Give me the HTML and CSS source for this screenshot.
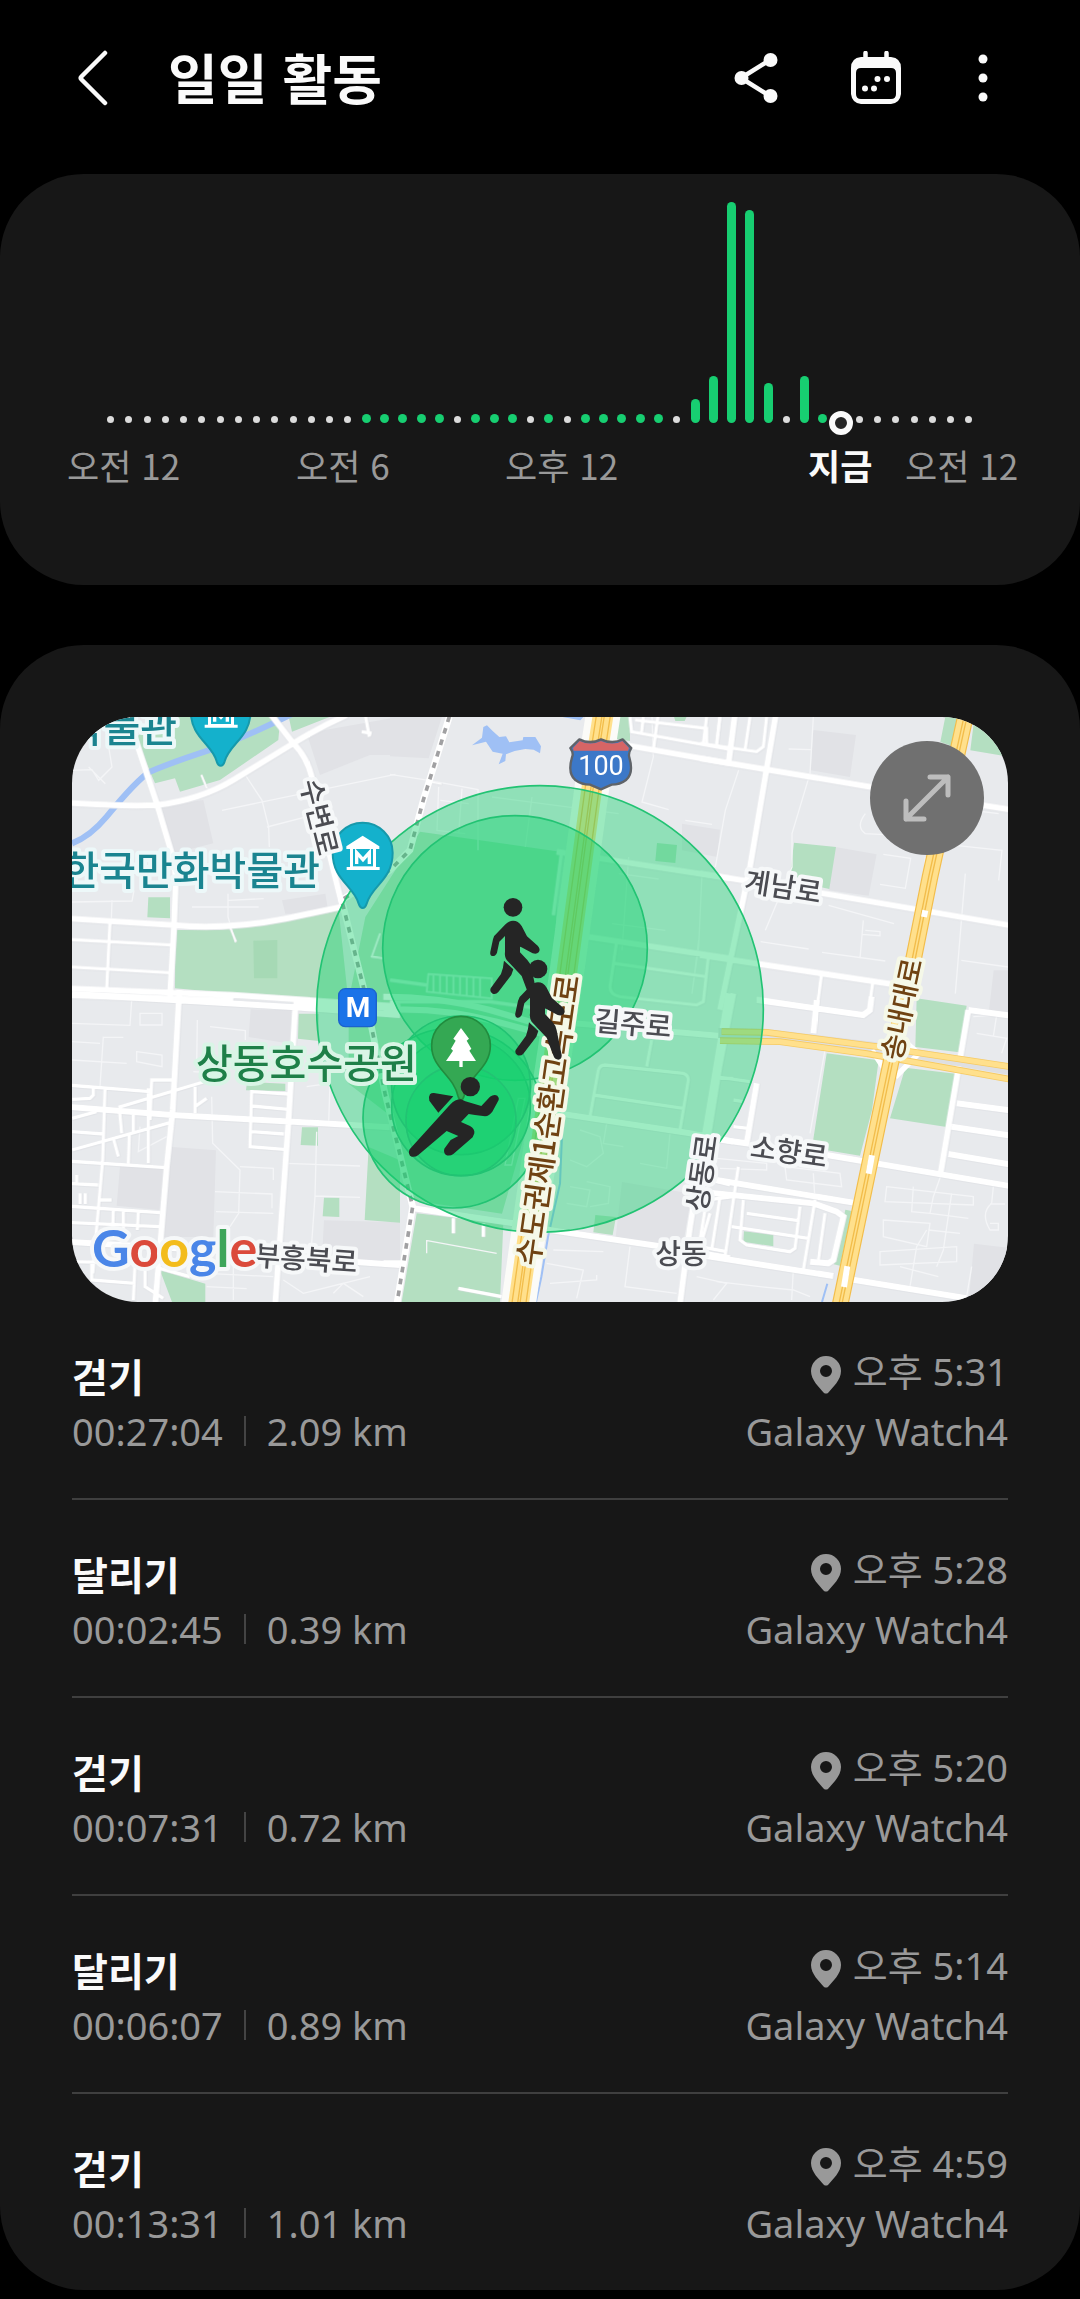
FILE: index.html
```html
<!DOCTYPE html>
<html lang="ko">
<head>
<meta charset="utf-8">
<meta name="viewport" content="width=device-width, initial-scale=1">
<title>일일 활동</title>
<link rel="stylesheet" href="styles.css">
</head>
<body>
<header class="topbar">
  <button class="icon-btn" aria-label="뒤로">
    <svg width="32" height="58" viewBox="0 0 32 58"><path d="M28 4 4.500 27.500Q3 29 4.500 30.500L28 54" fill="none" stroke="currentColor" stroke-width="4.500" stroke-linecap="round"/></svg>
  </button>
  <h1 class="title">일일 활동</h1>
  <div class="actions">
    <button class="icon-btn" aria-label="공유">
      <svg width="44" height="52" viewBox="0 0 44 52" fill="currentColor"><path d="M7 26 36 8M7 26 36 44" stroke="currentColor" stroke-width="4.500"/><circle cx="7.500" cy="26" r="7"/><circle cx="36.500" cy="8" r="7"/><circle cx="36.500" cy="44" r="7"/></svg>
    </button>
    <button class="icon-btn" aria-label="달력">
      <svg width="50" height="54" viewBox="0 0 50 54" fill="currentColor"><path fill-rule="evenodd" d="M10 6H40Q50 7 50 17V43Q49 52 40 53H10Q1 52 0 43V17Q0 7 10 6ZM10 17Q5 17 5 22V43Q5 48 10 48H40Q45 48 45 43V22Q45 17 40 17Z"/><path d="M14.500 2V8M35.500 2V8" stroke="currentColor" stroke-width="4.500" stroke-linecap="round"/><circle cx="26.500" cy="28" r="3"/><circle cx="36" cy="28" r="3"/><circle cx="14" cy="37.500" r="3"/><circle cx="23" cy="37.500" r="3"/></svg>
    </button>
    <button class="icon-btn narrow" aria-label="더보기">
      <svg width="10" height="48" viewBox="0 0 10 48" fill="currentColor"><circle cx="5" cy="5" r="4.500"/><circle cx="5" cy="24" r="4.500"/><circle cx="5" cy="43" r="4.500"/></svg>
    </button>
  </div>
</header>

<main>
<section class="card chart" aria-label="시간대별 활동">
  <div class="bars">
    <i></i><i></i><i></i><i></i><i></i><i></i><i></i><i></i><i></i><i></i><i></i><i></i><i></i><i></i>
    <b></b><b></b><b></b><b></b><b></b><i></i><b></b><b></b><b></b><i></i><b></b><i></i>
    <b></b><b></b><b></b><b></b><b></b><i></i>
    <b style="height:24px"></b><b style="height:47px"></b><b style="height:221px"></b><b style="height:213px"></b><b style="height:40px"></b><i></i><b style="height:47px"></b><b></b><i class="now"></i>
    <i></i><i></i><i></i><i></i><i></i><i></i><i></i>
  </div>
  <div class="axis"><span>오전 12</span><span>오전 6</span><span>오후 12</span><strong>지금</strong><span>오전 12</span></div>
</section>

<section class="card log">
  <div class="map">
    <svg class="map-art" viewBox="0 0 936 585" role="img" aria-label="활동 지도">
      <rect width="936" height="585" fill="#e8eaed"/>
      <g transform="scale(.33333)">
        <!-- districts -->
        <g fill="#e1e2e6">
          <path d="M269 269 394 249 424 379 304 409ZM704 49 984-1V114H894L744 174ZM630 550 760 530 770 590 640 590Z"/>
          <path d="M954-1H1110L1070 124 954 118ZM1830 320 1944 338 1936 420 1830 400ZM2224 39 2352 54 2334 180 2216 160ZM2290 390 2414 412 2390 536 2270 520Z"/>
          <path d="M536 877 660 880 654 980 530 960ZM300 1290 432 1300 424 1560 266 1560ZM144 1348 276 1352 268 1480 134 1466ZM756 1510 984 1516V1640L750 1620Z"/>
          <path d="M2706 1580 2808 1592V1755H2690ZM1650 1395 1860 1430 1830 1600 1630 1570ZM2765 760H2808V890H2750Z"/>
        </g>
        <!-- parks -->
        <g fill="#b4dfc1">
          <path d="M190 60 300-1H625L619 69 444 189 324 224 309 184 249 199ZM650-1H775L660 44ZM229 541H294V604L226 601ZM309 639H444L644 609 800 580 830 860 309 814Z"/>
          <path d="M1638-1H1674V72L1630 66ZM1806-1H1844L1838 12H1810ZM1755 378 1815 384 1810 438 1750 432ZM2166 377 2292 390 2272 516 2152 490ZM2620-1H2665L2650 90 2605 75ZM2705 20 2808 60V119L2695 100Z"/>
          <path d="M1044 344 1464 404 1430 1000 1290 1490 1020 1450 960 1200 830 1100 830 850 880 600ZM680 890H740V972L678 965ZM525 1095 640 1100V1122L522 1120ZM690 1231H738V1286L686 1284ZM756 1442H802V1500L752 1498ZM890 1290 984 1330V1517L878 1509ZM264 1660 400 1700V1755H300Z"/>
          <path d="M1034 1489 1294 1519 1284 1755H989ZM1570 1494 1632 1500 1622 1554 1564 1546ZM2264 1009 2420 1030 2400 1180 2364 1316 2220 1292ZM2534 844 2684 866 2662 1006 2530 990ZM2500 1052 2650 1070 2624 1230 2454 1204ZM2016 1543 2104 1554V1588L2014 1574ZM2320 1478 2340 1482 2304 1646 2286 1642Z"/>
        </g>
        <path d="M544 671 616 669V784H546Z" fill="#a6d9b5"/>
        <!-- water -->
        <path d="M0 379Q54 359 104 299 194 189 234 164 304 134 444 89 564 39 664-11" fill="none" stroke="#9fc0f5" stroke-width="18"/>
        <path d="M1200 85 1230 62 1234 30 1245 25 1262 42 1282 60 1302 58 1312 76 1352 70 1354 60 1390 60 1407 88 1404 109 1385 98 1360 96 1328 102 1302 112 1300 132 1280 142 1292 110 1262 104 1242 74ZM1466-1H1535L1525 10Z" fill="#9fc0f5"/>
        <path d="M1472 1210 1464 1400 1428 1560 1408 1680 1392 1755M2266 1700 2250 1755" fill="none" stroke="#9fc0f5" stroke-width="6"/>
        <!-- minor streets -->
        <g class="lanes">
          <path d="M0 160 60 158 80 190 120 150 110 90M50 150 100 200M388 174 410 220M520 174 570 250 590 330 592 390M450 280 970 172M585 330 740 290M360 570H560M468 530V600L490 676M470 550 575 545M120 550 118 610M0 555 180 552 186 520"/>
          <path d="M954 172 1070 190 1218 218V400M1100 210 1095 340 1180 350M1170 215 1160 350M1105 250 1190 260M1260 240 1640 290M1380 240 1360 390M1740-1 1744 120 1710 255 1790 278M1840 310 1920 322M2000 160 1960 280 1930 450M1640 470 1760 486M1620 620 1780 640M1670 420 1650 700M1890 470 1880 690 1860 830 1880 670"/>
          <path d="M2224 0 2214 170 2160 350V450L2080 640M2150 96 2216 98M2380 290Q2350 330 2380 350L2480 355M2434 412 2516 424 2500 514 2424 502M2560 420 2544 620M2620 270 2780 290M2600 380 2790 400 2780 490M2680 470 2650 830M2066 674 2210 696M2250 706 2440 732M2374 610 2364 724M2270 565 2466 620M2380 640 2424 644V656L2370 652M2668 730 2808 750"/>
        </g>
        <g class="lanes" transform="translate(-36 849)">
          <path d="M36 70 210 76 215 0M36 125 120 130M36 180 200 190M130 110 120 260M190 112 128 112M230 155 306 165V200L230 185ZM240 40H306V75H240ZM412 60 410 200M450 80 556 92V120M455 290 458 430 540 510 536 640 510 680M400 215 500 222M465 575 636 582V625M468 635 640 640M540 500 640 505V540M740 260 810 250 806 370M680 490 900 498M770 395 765 590 750 800M765 588 900 592M670 840 730 880 850 850 910 890M820 880 850 850 930 830M440 860 560 866M520 800V900M240 380 235 455 320 410M440 820 640 830"/>
        </g>
        <g class="lanes" transform="translate(954 849)">
          <path d="M385 295H405L365 495H345ZM570 390 630 410 640 460 590 500 540 480M650 370 640 430 700 440M750 490 830 505 840 400M540 560 600 570 590 620 530 610M590 545 660 560 655 610 600 620M490 750 640 755M470 790 580 810 560 895M480 850 620 840V825M720 740 705 860 860 880M920 830 1010 850 970 900M110 720V760M112 722 320 760"/>
        </g>
        <g class="lanes" transform="translate(1884 849)">
          <path d="M375 150 330 400M255 500 420 520 425 560 260 540ZM340 520 345 600M560 560 820 590V615L555 605ZM640 560 635 635 690 640 700 590 725 520M550 660 690 670 680 740 550 710ZM540 755 770 740V785L540 795ZM690 640 805 655M685 690 780 700M680 690 650 740 630 860M755 580 730 750 710 800M600 800 715 830M880 560 875 610Q840 640 870 690H895V670H870M870 612H915M820 50 890 45 880 110M830 100 920 115 905 160M50 845 180 860 280 870 330 890M280 810 275 900M815 800 800 890M0 470 200 490V510L60 505"/>
        </g>
        <!-- streets -->
        <g class="streets">
          <g transform="translate(-36 -51)">
            <path d="M220 100 290 310 338 470Q350 520 345 600L342 680 330 890M20 308Q200 320 290 315 420 300 520 240L700 130Q780 80 860 45M630 40 700 130Q740 170 755 230L800 430 845 610M20 655 340 675Q500 690 680 655L845 620M20 865 520 885 1020 920M20 885 520 903"/>
            <path class="mid" d="M20 718 335 735M20 800 330 818M150 665 140 870M915 40 928 110M905 95 935 100"/>
            <path class="thin" d="M424 225 440 265M505 670 528 725M960 700 935 770 970 775"/>
          </g>
          <g transform="translate(954 -51)">
            <path d="M620 120 1020 190M500 455 1020 535M590 710 1020 775"/>
            <path class="mid" d="M805 40 790 150M720 50 725 95 1020 148M735 60 950 85V135M990 45 980 135M760 50 755 95M680 725 660 860Q660 885 690 890L920 915 940 905 955 770M672 790 950 830M515 455 490 645M0 840 110 855M0 905 300 905 480 930"/>
            <path class="thin" d="M115 822 305 835V895L110 875ZM130 825V875M150 825V880M170 825V882M190 830V885M210 830V885M230 830V890M250 830V890M270 835V892M120 245 155 252"/>
          </g>
          <g transform="translate(1884 -51)">
            <path d="M0 175 520 262M850 316 940 330M228 40 150 500 60 930M0 520 400 585 940 678M0 765 640 862M105 40 85 195"/>
            <path class="mid" d="M0 130 170 155 190 140 200 50M60 50 50 130M20 50 10 130M150 50 135 150M365 820 350 930M518 850 505 940M170 895 460 942"/>
          </g>
          <g transform="translate(-36 849)">
            <path d="M358-30 338 330 320 500 285 920M706 20 685 370 645 920M20 320 335 345 700 365 990 382M36-18 706 22 1020 45M700 10 1020 25M20 725 600 760M800 780 1020 795"/>
            <path class="mid" d="M20 255 270 275M36 298 90 295 100 285V258M135 265 128 480 98 820M270 360 275 240H340M178 325 185 400M175 322 450 240M36 355 110 335M36 395 130 402M36 450 330 368M160 415 175 470M220 345V395M208 400 205 490M20 483 318 503M20 550 115 555M20 618 300 638M20 667 300 680M20 785 300 790M95 785V840L225 850M225 790 220 900M235 635 232 690M160 625 158 690M190 630V690M405 340V260M405 320 440 295M575 270 570 440 672 448M575 275 685 282M575 318 685 328M575 395 672 402M50 525V550M60 580V612M76 580V612M115 600H155M255 810V860L310 895M265 265V490M300 805 390 830"/>
          </g>
          <g transform="translate(954 849)">
            <path d="M-20 -10 Q150 -10 300 30L470 80M-20 30Q150 20 320 65L470 105M440 60 1020 110M70 625 370 670 480 690 830 742 1020 775M440 330 900 400 1030 425M1015 -20 945 400 900 680 870 910M-20 790H40"/>
            <path class="mid" d="M625 210Q630 195 645 195L880 220Q895 225 895 240L870 390M625 210 600 350M610 285 880 325M785 120 770 200M990 235H1030M190 655V700M280 670V710M205 865 335 890M960 540 1020 555M960 640 930 740 1010 755M950 600 1030 590"/>
          </g>
          <g transform="translate(1884 849)">
            <path d="M380 465 940 560M170 250 140 430 0 410M350 0 340 100M170 0 490 45 510 30 515 -10M90 0 10 500M100 -20 20 400M50 540 460 608M0 765 400 828M450 838 800 895M805 30 720 530M805 30 940 48M770 310 940 332M755 380 940 408M745 462 940 495M0 575 340 610 410 635 430 650 400 780 385 790 330 785"/>
            <path class="mid" d="M115 500 75 770M60 590 35 750M130 600 120 720 140 735 270 755 285 745 300 620M140 640 295 662M95 680 325 715M345 600 310 810M375 640 355 780M20 600 0 720M60 232 150 245M100 380 145 385M130 305 100 300"/>
          </g>
        </g>
        <!-- highways -->
        <g fill="none">
          <path d="M1594-10 1560 210 1484 769 1419 1200 1339 1765" stroke="#fbfbf8" stroke-width="104"/>
          <path d="M1594-10 1560 210 1484 769 1419 1200 1339 1765" stroke="#ffe08c" stroke-width="62"/>
          <path d="M1574-10 1540 210 1464 769 1399 1200 1319 1765M1591-10 1557 210 1481 769 1416 1200 1336 1765M1598-10 1564 210 1488 769 1423 1200 1343 1765M1616-10 1582 210 1506 769 1441 1200 1361 1765" stroke="#f2bd4b" stroke-width="4"/>
          <path d="M1939 948 2080 950 2424 992 2820 1060" stroke="#dedfe2" stroke-width="30"/>
          <path d="M2400 1000 2446 1070M2484 960 2540 1010 2470 1080M2470 930 2440 1010" stroke="#fff" stroke-width="16"/>
          <path d="M1949 944 2084 946 2424 990 2820 1050M1944 971 2124 974 2384 1010 2820 1088" stroke="#f6ca63" stroke-width="20"/>
          <path d="M1949 944 2084 946 2424 990 2820 1050M1944 971 2124 974 2384 1010 2820 1088" stroke="#ffe08c" stroke-width="15"/>
          <path d="M2682-10 2574 480 2524 729 2454 1049 2304 1765" stroke="#f2bd4b" stroke-width="50"/>
          <path d="M2682-10 2574 480 2524 729 2454 1049 2304 1765" stroke="#ffe08c" stroke-width="43"/>
          <path d="M2678-10 2570 480 2520 729 2450 1049 2300 1765M2687-10 2579 480 2529 729 2459 1049 2309 1765" stroke="#f2bd4b" stroke-width="4"/>
          <path d="M2400 1315 2390 1370M2326 1648 2316 1710M2560 580 2556 600" stroke="#fff" stroke-width="18"/>
        </g>
        <!-- railway -->
        <g fill="none">
          <path d="M1132-1 1054 249 1014 399 954 459 809 549 874 809 939 1129 1022 1469 974 1765" stroke="#fff" stroke-width="20"/>
          <path d="M1132-1 1054 249 1014 399 954 459 809 549 874 809 939 1129 1022 1469 974 1765" stroke="#a0a0a2" stroke-width="11" stroke-dasharray="17 19"/>
        </g>
        <!-- activity areas -->
        <g class="areas">
          <circle cx="1404" cy="876" r="670"/>
          <circle cx="1329" cy="693" r="397"/>
          <circle cx="1143" cy="1203" r="270"/>
          <circle cx="1167" cy="1168" r="208"/>
          <circle cx="1167" cy="1105" r="208"/>
          <circle cx="1167" cy="1211" r="165"/>
        </g>
        <!-- museum pins -->
        <g id="museum">
          <path d="M872 573Q864 573 860 560C845 505 782 490 782 407A90 90 0 0 1 962 407C962 490 899 505 884 560Q880 573 872 573Z" fill="#14b1cc" stroke="#1699ab" stroke-width="6"/>
          <path d="M823 388 872 356 922 388V396H912V450H923V459H824V450H834V396H823Z" fill="#fff"/>
          <path d="M843 396H903V448H843Z" fill="#14b1cc"/>
          <path d="M854 441V407L873 428 892 407V441" fill="none" stroke="#fff" stroke-width="10"/>
        </g>
        <use href="#museum" x="-426" y="-427"/>
        <rect x="800" y="815" width="113" height="114" rx="20" fill="#1a73e8" stroke="#1b62cc" stroke-width="4"/>
        <!-- route shield -->
        <g transform="translate(954 -51)">
          <path d="M568 118Q600 134 633 118 668 134 698 118L724 144Q714 160 718 172 732 220 708 240 690 254 665 254L633 268 600 254Q575 254 556 240 532 220 546 172 552 160 541 144Z" fill="#3c78c8" stroke="#5f6368" stroke-width="7" stroke-linejoin="round"/>
          <path d="M569 123Q600 138 633 123 668 138 697 123L717 144 714 152H551L549 144Z" fill="#d66565"/>
        </g>
        <!-- park pin -->
        <g transform="translate(954 849)">
          <path d="M213 300Q207 300 204 288C190 225 125 205 125 137A88 88 0 0 1 301 137C301 205 236 225 222 288Q219 300 213 300Z" fill="#34a853" stroke="#218c3e" stroke-width="5"/>
          <path d="M213 84 237 116 230 122 244 146 238 152 258 183H218V201H208V183H168L189 152 183 146 197 122 190 116Z" fill="#fff"/>
        </g>
      </g>

      <g class="labels">
        <g class="poi">
          <text x="105" y="25" text-anchor="end">박물관</text>
          <text x="248" y="168" text-anchor="end">한국만화박물관</text>
        </g>
        <text class="park" x="124" y="361">상동호수공원</text>
        <g class="street-name" text-anchor="middle">
          <text transform="translate(247 100) rotate(76)" y="10">수변로</text>
          <text transform="translate(711 170) rotate(9)" y="10">계남로</text>
          <text transform="translate(561 307) rotate(5)" y="10">길주로</text>
          <text transform="translate(717 435) rotate(8)" y="10">소향로</text>
          <text transform="translate(630 456) rotate(-82)" y="10">상동로</text>
          <text x="609" y="547">상동</text>
          <text transform="translate(234 542) rotate(4)" y="10">부흥북로</text>
        </g>
        <g class="highway-name" text-anchor="middle">
          <text transform="translate(476 403) rotate(-82)" y="11">수도권제1순환고속도로</text>
          <text transform="translate(830 292) rotate(-78)" y="10">송내대로</text>
        </g>
        <text class="sign" x="529" y="58" text-anchor="middle">100</text>
        <text class="metro" x="286" y="300" text-anchor="middle">M</text>
        <text class="brand" x="20" y="550"><tspan fill="#4a86e8">G</tspan><tspan fill="#db4a3b">o</tspan><tspan fill="#f3bc1c">o</tspan><tspan fill="#4a86e8">g</tspan><tspan fill="#3ea55a">l</tspan><tspan fill="#db4a3b">e</tspan></text>
      </g>

      <!-- workout markers -->
      <g transform="scale(.33333)" fill="#252525">
        <g id="walker" transform="translate(954 -51)">
          <circle cx="369" cy="622" r="28"/>
          <path d="M369 662Q385 662 395 678L411 709 443 737Q453 748 446 757 440 764 428 760L393 741Q390 739 390 743V757L412 780Q422 790 425 806L440 880Q441 892 430 894 420 894 416 884L395 828 350 780Q343 770 345 755V708L328 725 321 758Q316 770 306 768 299 765 301 755L309 718Q312 705 322 698L345 674Q357 662 369 662ZM342 782 370 808 364 825 325 876Q318 884 308 881 298 875 302 865L333 822Q340 805 342 782Z"/>
        </g>
        <use href="#walker" x="75" y="185"/>
        <g transform="translate(954 849)">
          <circle cx="241" cy="260" r="29"/>
          <path d="M213 298 226 304 274 318 300 290Q312 282 322 287 328 293 326 300L307 335Q298 347 285 349L255 345 236 342 213 366 240 378Q255 386 253 400L248 412 190 462Q178 470 167 464 160 457 163 446L182 420 205 408 170 393 85 465Q72 475 60 467 54 458 59 448L180 314Q195 298 213 298ZM132 279 190 289 145 338 118 302Q115 290 120 283 125 278 132 279Z"/>
        </g>
      </g>
    </svg>
    <button class="expand" aria-label="지도 확대">
      <svg width="50" height="50" viewBox="0 0 50 50"><path d="M4 46 46 4M28 4H46V22M4 28V46H22" fill="none" stroke="currentColor" stroke-width="5" stroke-linecap="round" stroke-linejoin="round"/></svg>
    </button>
  </div>

  <svg width="0" height="0" class="sprite"><symbol id="pin" viewBox="0 0 30 38"><path fill-rule="evenodd" d="M15 0A15 15 0 0 1 30 15C30 24 22 31 17 37Q15 38 13 37C8 31 0 24 0 15A15 15 0 0 1 15 0ZM15 9A6 6 0 0 0 15 21 6 6 0 0 0 15 9Z"/></symbol></svg>

  <ul class="workouts">
    <li>
      <div><h2>걷기</h2><p class="stats"><span>00:27:04</span><span>2.09 km</span></p></div>
      <div class="meta"><p class="when"><svg class="pin"><use href="#pin"/></svg>오후 5:31</p><p>Galaxy Watch4</p></div>
    </li>
    <li>
      <div><h2>달리기</h2><p class="stats"><span>00:02:45</span><span>0.39 km</span></p></div>
      <div class="meta"><p class="when"><svg class="pin"><use href="#pin"/></svg>오후 5:28</p><p>Galaxy Watch4</p></div>
    </li>
    <li>
      <div><h2>걷기</h2><p class="stats"><span>00:07:31</span><span>0.72 km</span></p></div>
      <div class="meta"><p class="when"><svg class="pin"><use href="#pin"/></svg>오후 5:20</p><p>Galaxy Watch4</p></div>
    </li>
    <li>
      <div><h2>달리기</h2><p class="stats"><span>00:06:07</span><span>0.89 km</span></p></div>
      <div class="meta"><p class="when"><svg class="pin"><use href="#pin"/></svg>오후 5:14</p><p>Galaxy Watch4</p></div>
    </li>
    <li>
      <div><h2>걷기</h2><p class="stats"><span>00:13:31</span><span>1.01 km</span></p></div>
      <div class="meta"><p class="when"><svg class="pin"><use href="#pin"/></svg>오후 4:59</p><p>Galaxy Watch4</p></div>
    </li>
  </ul>
</section>
</main>
</body>
</html>
```
FILE: styles.css
```css
* { box-sizing: border-box; margin: 0; padding: 0; }
body {
  background: #000;
  color: #fafafa;
  font-family: "Noto Sans", "Noto Sans CJK KR", sans-serif;
  padding-bottom: 9px;
}
button { border: 0; background: none; color: inherit; cursor: pointer; }

.topbar {
  display: flex;
  align-items: center;
  height: 156px;
  margin-bottom: 18px;
  padding: 0 80px 0 63px;
}
.icon-btn {
  display: flex;
  align-items: center;
  justify-content: center;
  width: 60px;
  height: 60px;
}
.icon-btn.narrow { width: 34px; }
.title {
  margin-left: 45px;
  padding-bottom: 2px;
  font: 700 54px/80px "Noto Sans CJK KR", sans-serif;
}
.actions { display: flex; gap: 60px; margin-left: auto; }

.card { background: #171717; border-radius: 84px; }

.chart { padding: 28px 0 94px; }
.bars {
  display: flex;
  align-items: flex-end;
  justify-content: space-between;
  height: 221px;
  margin: 0 106px;
}
.bars b {
  width: 9px;
  height: 9px;
  border-radius: 5px;
  background: #17ce71;
}
.bars i {
  width: 7px;
  height: 7px;
  margin: 0 1px;
  border-radius: 50%;
  background: #dcdcdc;
}
.bars .now {
  width: 24px;
  height: 24px;
  margin: 0 -7px -12px -8px;
  border: 6px solid #fafafa;
  background: #252525;
}
.axis {
  display: grid;
  grid-template-columns: 229fr 209fr 303fr 97fr 175fr;
  margin-top: 16px;
  padding-left: 67px;
  color: #999;
  font: 400 35px/52px "Noto Sans CJK KR", sans-serif;
  white-space: nowrap;
}
.axis strong { color: #fafafa; font-weight: 700; }

.log { margin-top: 60px; padding: 72px 72px 0; }

.map {
  position: relative;
  overflow: hidden;
  border-radius: 66px;
}
.map-art { display: block; width: 100%; height: auto; }
.expand {
  position: absolute;
  top: 24px;
  right: 24px;
  display: flex;
  align-items: center;
  justify-content: center;
  width: 114px;
  height: 114px;
  border-radius: 50%;
  background: #707070;
  color: #bdbdbd;
}

.lanes path { fill: none; stroke: #f4f5f7; stroke-width: 4; }
.streets { filter: drop-shadow(1px 1px 0 #d6d8dd); }
.streets path { fill: none; stroke: #fff; stroke-width: 18; }
.streets .mid { stroke-width: 10; }
.streets .thin { stroke-width: 5; }
.areas circle {
  fill: #13d06e;
  fill-opacity: .41;
  stroke: #22c373;
  stroke-width: 5;
}

.labels {
  font-family: "Noto Sans CJK KR", sans-serif;
  font-weight: 500;
  font-size: 28px;
}
.labels text { paint-order: stroke; stroke-linejoin: round; stroke-width: 8px; }
.poi text { font-size: 40px; fill: #1a8490; stroke: #edf8f9; }
.labels .park { font-size: 40px; fill: #1e8048; stroke: #d9f5e6; }
.street-name text { fill: #4b4c52; stroke: #f6f8f9; }
.highway-name text { fill: #6f4212; stroke: #f5f8e8; }
.highway-name text:first-child { font-size: 30px; }
.labels .sign { font: 400 27px Roboto, sans-serif; fill: #fff; stroke: none; }
.labels .metro { font: 700 28px Roboto, sans-serif; fill: #fff; stroke: none; }
.labels .brand { font: 700 52px Lato, sans-serif; stroke: #f6f8f9; }

.sprite { position: absolute; }
.workouts {
  list-style: none;
  color: #999;
  font-size: 38px;
  font-weight: 400;
  line-height: 60px;
}
.workouts li {
  display: flex;
  align-items: flex-end;
  justify-content: space-between;
  padding: 39px 0 37px;
}
.workouts li + li { border-top: 2px solid #3f3f3f; }
.workouts h2 {
  margin-bottom: 4px;
  color: #fafafa;
  font: 700 39px/44px "Noto Sans CJK KR", sans-serif;
}
.stats { display: flex; align-items: center; }
.stats span + span {
  margin-left: 21px;
}
.stats span + span::before {
  content: "";
  display: inline-block;
  width: 2px;
  height: 30px;
  margin-right: 21px;
  background: #444;
}
.meta { text-align: right; }
.when { display: flex; align-items: center; justify-content: flex-end; }
.pin { width: 30px; height: 38px; margin: 8px 12px 0 0; fill: #999; }
```
